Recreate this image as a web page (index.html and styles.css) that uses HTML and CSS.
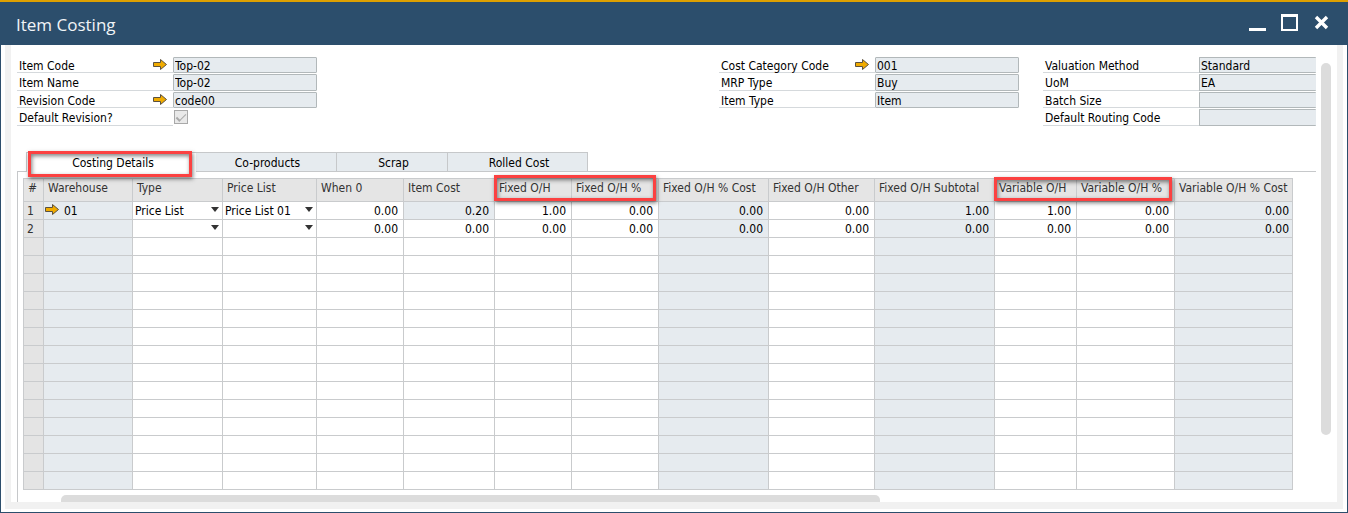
FILE: index.html
```html
<!DOCTYPE html>
<html lang="en">
<head>
    <meta charset="UTF-8">
    <meta name="viewport" content="width=device-width, initial-scale=1.0">
    <title>Item Costing</title>
    <link rel="stylesheet" href="styles.css">
</head>
<body>
    <svg class="symbols" width="0" height="0" aria-hidden="true">
        <symbol id="link-arrow" viewBox="0 0 14 11">
            <path d="M.5 3.5h7v-3l6 5-6 5v-3h-7z" fill="#f0ab00" stroke="#5b5140"/>
        </symbol>
    </svg>

    <div class="window">
        <header class="titlebar">
            <h1>Item Costing</h1>
            <div class="window-buttons">
                <button type="button" aria-label="Minimize"><svg width="17" height="17"><path d="M0 14h17v3H0z" fill="#fff"/></svg></button>
                <button type="button" aria-label="Maximize"><svg width="17" height="17"><path d="M1 1.5h15v14.500H1z" fill="none" stroke="#fff" stroke-width="2"/><path d="M0 0h17v3H0z" fill="#fff"/></svg></button>
                <button type="button" aria-label="Close"><svg width="17" height="17"><path d="M3 3l11 11M14 3L3 14" stroke="#fff" stroke-width="3.400"/></svg></button>
            </div>
        </header>

        <div class="frame">
            <main class="content">
                <form class="details">
                    <div class="fields fields-item">
                        <label for="item-code">Item Code <svg class="arrow"><use href="#link-arrow"/></svg></label>
                        <input type="text" id="item-code" value="Top-02" readonly>
                        <label for="item-name">Item Name</label>
                        <input type="text" id="item-name" class="wide" value="Top-02" readonly>
                        <label for="revision-code">Revision Code <svg class="arrow"><use href="#link-arrow"/></svg></label>
                        <input type="text" id="revision-code" value="code00" readonly>
                        <label for="default-revision">Default Revision?</label>
                        <input type="checkbox" id="default-revision" checked disabled>
                    </div>

                    <div class="fields fields-category">
                        <label for="category-code">Cost Category Code <svg class="arrow"><use href="#link-arrow"/></svg></label>
                        <input type="text" id="category-code" value="001" readonly>
                        <label for="mrp-type">MRP Type</label>
                        <input type="text" id="mrp-type" value="Buy" readonly>
                        <label for="item-type">Item Type</label>
                        <input type="text" id="item-type" value="Item" readonly>
                    </div>

                    <div class="fields fields-valuation">
                        <label for="valuation">Valuation Method</label>
                        <input type="text" id="valuation" value="Standard" readonly>
                        <label for="uom">UoM</label>
                        <input type="text" id="uom" value="EA" readonly>
                        <label for="batch-size">Batch Size</label>
                        <input type="text" id="batch-size" readonly>
                        <label for="routing-code">Default Routing Code</label>
                        <input type="text" id="routing-code" readonly>
                    </div>
                </form>

                <div class="tabs" role="tablist">
                    <button type="button" role="tab" class="tab tab-details active" aria-selected="true">Costing Details<span class="marker marker-tab"></span></button>
                    <button type="button" role="tab" class="tab tab-coproducts" aria-selected="false">Co-products</button>
                    <button type="button" role="tab" class="tab tab-scrap" aria-selected="false">Scrap</button>
                    <button type="button" role="tab" class="tab tab-rolled" aria-selected="false">Rolled Cost</button>
                </div>

                <section class="tab-panel">
                    <table class="grid">
                        <colgroup>
                            <col class="c-num"><col class="c-warehouse"><col class="c-type"><col class="c-pricelist">
                            <col class="c-when"><col class="c-itemcost"><col class="c-fixed"><col class="c-fixedpct">
                            <col class="c-fixedpctcost"><col class="c-fixedother"><col class="c-fixedsub">
                            <col class="c-var"><col class="c-varpct"><col class="c-varpctcost">
                        </colgroup>
                        <thead>
                            <tr>
                                <th>#</th>
                                <th>Warehouse</th>
                                <th>Type</th>
                                <th>Price List</th>
                                <th>When 0</th>
                                <th>Item Cost</th>
                                <th>Fixed O/H<span class="marker marker-fixed"></span></th>
                                <th>Fixed O/H %</th>
                                <th>Fixed O/H % Cost</th>
                                <th>Fixed O/H Other</th>
                                <th>Fixed O/H Subtotal</th>
                                <th>Variable O/H<span class="marker marker-variable"></span></th>
                                <th>Variable O/H %</th>
                                <th>Variable O/H % Cost</th>
                            </tr>
                        </thead>
                        <tbody id="grid-rows">
                            <tr>
                                <td>1</td>
                                <td><div class="linked"><svg class="arrow"><use href="#link-arrow"/></svg>01</div></td>
                                <td><div class="pick"><select aria-label="Type"><option>Price List</option></select></div></td>
                                <td><div class="pick"><select aria-label="Price List"><option>Price List 01</option></select></div></td>
                                <td><input type="text" aria-label="When 0" value="0.00"></td>
                                <td class="locked">0.20</td>
                                <td><input type="text" aria-label="Fixed O/H" value="1.00"></td>
                                <td><input type="text" aria-label="Fixed O/H %" value="0.00"></td>
                                <td>0.00</td>
                                <td><input type="text" aria-label="Fixed O/H Other" value="0.00"></td>
                                <td>1.00</td>
                                <td><input type="text" aria-label="Variable O/H" value="1.00"></td>
                                <td><input type="text" aria-label="Variable O/H %" value="0.00"></td>
                                <td>0.00</td>
                            </tr>
                            <tr>
                                <td>2</td>
                                <td></td>
                                <td><div class="pick"><select aria-label="Type"><option></option></select></div></td>
                                <td><div class="pick"><select aria-label="Price List"><option></option></select></div></td>
                                <td><input type="text" aria-label="When 0" value="0.00"></td>
                                <td><input type="text" aria-label="Item Cost" value="0.00"></td>
                                <td><input type="text" aria-label="Fixed O/H" value="0.00"></td>
                                <td><input type="text" aria-label="Fixed O/H %" value="0.00"></td>
                                <td>0.00</td>
                                <td><input type="text" aria-label="Fixed O/H Other" value="0.00"></td>
                                <td>0.00</td>
                                <td><input type="text" aria-label="Variable O/H" value="0.00"></td>
                                <td><input type="text" aria-label="Variable O/H %" value="0.00"></td>
                                <td>0.00</td>
                            </tr>
                        </tbody>
                    </table>
                    <div class="scroll-x"></div>
                </section>
            </main>
            <div class="scroll-y"></div>
        </div>
    </div>

    <script>
        // fill the rest of the grid with empty rows
        const gridRows = document.getElementById('grid-rows');
        const columnCount = document.querySelectorAll('.grid col').length;

        while (gridRows.rows.length < 16) {
            const row = gridRows.insertRow();
            for (let i = 0; i < columnCount; i++) {
                row.insertCell();
            }
        }
    </script>
</body>
</html>
```
FILE: styles.css
```css
* {
    box-sizing: border-box;
}

body {
    margin: 0;
    background: #fff;
    color: #000;
    font: 12px/14px "DejaVu Sans Condensed", Tahoma, sans-serif;
}

button, input, select {
    font: inherit;
    color: inherit;
    margin: 0;
    padding: 0;
    border: 0;
    background: none;
}

.symbols {
    display: none;
}

.arrow {
    flex: none;
    width: 14px;
    height: 11px;
}

/* window */
.window {
    border: 1px solid #2c4e6c;
    border-top: 0;
    padding: 0 4px 3px;
}

.titlebar {
    display: flex;
    justify-content: space-between;
    height: 45px;
    margin: 0 -5px;
    padding: 12px 18px 0 16px;
    border-top: 2px solid #dfa000;
    background: #2c4e6c;
}

.titlebar h1 {
    margin: 0;
    color: #f1f4f7;
    font: 400 17px/22px "Open Sans", "Segoe UI", sans-serif;
}

.window-buttons {
    display: flex;
    gap: 15px;
}

.window-buttons button {
    width: 17px;
    height: 17px;
}

.window-buttons svg {
    display: block;
}

.frame {
    display: flex;
    border: solid #f1f1f1;
    border-width: 0 6px 7px;
}

.content {
    flex: 1;
    min-width: 0;
    padding: 12px 0 0 6px;
}

/* header fields */
.details {
    display: flex;
    gap: 24px;
    margin-bottom: 26px;
}

.fields {
    display: grid;
    grid-template-columns: 156px 1fr;
    grid-template-rows: 16px 17px 16px 17px;
    row-gap: 1px;
}

.fields-item {
    width: 396px;
    margin-right: auto;
}

.fields-category {
    width: 300px;
}

.fields-valuation {
    width: 273px;
}

.fields label {
    display: flex;
    justify-content: space-between;
    padding: 2px 6px 0 2px;
    border-bottom: 1px solid #d5d9dc;
    white-space: nowrap;
}

.fields input[type="text"] {
    width: 144px;
    padding: 1px 2px 0 1px;
    border: 1px solid #b2b8ba;
    border-radius: 1px;
    background: #e6ebef;
}

.fields .wide {
    width: 240px;
}

.fields-valuation input[type="text"] {
    width: 100%;
    border-right: 0;
}

.fields input[type="checkbox"] {
    appearance: none;
    display: grid;
    place-items: center;
    width: 14px;
    height: 14px;
    margin: 1px;
    border: 1px solid #a9a9a9;
    background: #e9e9e9;
}

.fields input[type="checkbox"]:checked::before {
    content: "";
    width: 8px;
    height: 4px;
    margin-bottom: 2px;
    border: solid #aaa;
    border-width: 0 0 1px 2px;
    transform: rotate(-45deg);
}

/* tabs */
.tabs {
    display: flex;
    height: 20px;
    padding-left: 9px;
    border-bottom: 1px solid #c6c8ca;
}

.tab {
    position: relative;
    padding: 1px 0 0 3px;
    border-top: 1px solid #c6c8ca;
    border-right: 1px solid #c6c8ca;
    background: #e6ebef;
}

.tab.active {
    height: 20px;
    padding-bottom: 1px;
    border-left: 1px solid #c6c8ca;
    border-right: 0;
    background: #fff;
}

.tab-details {
    width: 170px;
}

.tab-coproducts {
    width: 141px;
}

.tab-scrap {
    width: 111px;
}

.tab-rolled {
    width: 140px;
}

.tab-panel {
    padding: 6px 23px 0 5px;
    border-left: 1px solid #c6c8ca;
}

/* grid */
.grid {
    width: 100%;
    table-layout: fixed;
    border-collapse: separate;
    border-spacing: 0;
    border: solid #c9cbcd;
    border-width: 1px 0 0 1px;
}

.c-num { width: 20px; }
.c-warehouse { width: 89px; }
.c-type { width: 90px; }
.c-pricelist { width: 94px; }
.c-when { width: 87px; }
.c-itemcost { width: 91px; }
.c-fixed { width: 77px; }
.c-fixedpct { width: 87px; }
.c-fixedpctcost { width: 110px; }
.c-fixedother { width: 106px; }
.c-fixedsub { width: 120px; }
.c-var { width: 82px; }
.c-varpct { width: 98px; }
.c-varpctcost { width: 118px; }

.grid th, .grid td {
    padding: 0;
    border: solid #c9cbcd;
    border-width: 0 1px 1px 0;
    white-space: nowrap;
}

.grid th {
    position: relative;
    height: 23px;
    padding: 0 0 4px 4px;
    background: #e5e5e5;
    color: #333;
    font-weight: 400;
    text-align: left;
}

.grid td {
    height: 18px;
    padding: 2px 5px 0 0;
    line-height: 15px;
    text-align: right;
}

.grid td:nth-child(1) {
    padding: 2px 0 0 3px;
    background: #e4e4e4;
    color: #333;
    text-align: left;
}

.grid td:nth-child(2),
.grid td:nth-child(9),
.grid td:nth-child(11),
.grid td:nth-child(14),
.grid .locked {
    background: #e6ebef;
}

.grid td:nth-child(14) {
    padding-right: 3px;
}

.grid td:nth-child(3), .grid td:nth-child(4) {
    padding: 0;
}

.grid input {
    display: block;
    width: 100%;
    height: 15px;
    text-align: right;
}

.linked {
    display: flex;
    gap: 5px;
    padding-left: 1px;
}

.pick {
    position: relative;
}

.pick select {
    appearance: none;
    display: block;
    width: 100%;
    height: 17px;
    padding: 2px 0 0 2px;
}

.pick::after {
    content: "";
    position: absolute;
    top: 5px;
    right: 3px;
    border: 4px solid transparent;
    border-top: 5px solid #333;
    border-bottom: 0;
    pointer-events: none;
}

/* red highlight boxes */
.marker {
    position: absolute;
    z-index: 1;
    border: 3px solid #fb4141;
    box-shadow: 1px 2px 4px rgba(0, 0, 0, .5), inset 1px 2px 4px rgba(0, 0, 0, .5);
    pointer-events: none;
}

.marker-tab {
    top: -2px;
    left: 1px;
    width: 164px;
    height: 26px;
}

.marker-fixed {
    top: -4px;
    left: -1px;
    width: 162px;
    height: 26px;
}

.marker-variable {
    top: -2px;
    left: -1px;
    width: 178px;
    height: 24px;
}

/* scrollbars */
.scroll-x {
    width: 64.5%;
    height: 7px;
    margin: 5px 0 0 38px;
    border-radius: 5px 5px 0 0;
    background: #dcdcdc;
}

.scroll-y {
    width: 10px;
    margin: 18px 6px 67px 5px;
    border-radius: 5px;
    background: #dcdcdc;
}
```
